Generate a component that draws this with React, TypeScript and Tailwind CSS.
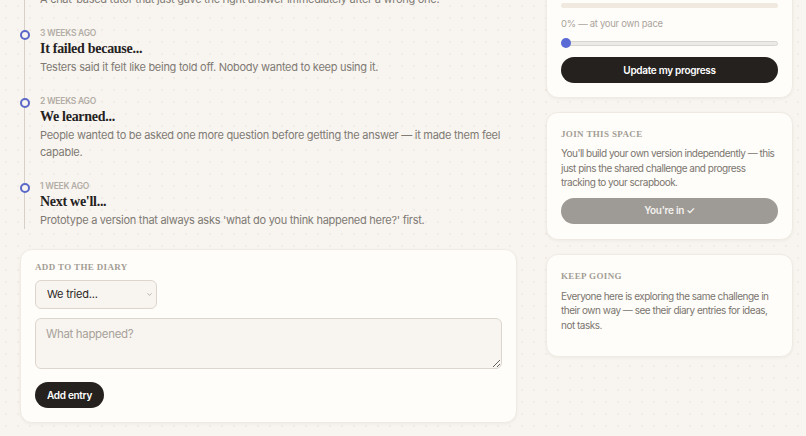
import { ChevronDown } from "lucide-react";

const sans = "font-['Inter','Noto_Sans',sans-serif]";
const serif = "font-['Liberation_Serif','DejaVu_Serif',serif]";

const entries = [
    {
        when: "4 weeks ago",
        title: "We tried...",
        body: "A chat-based tutor that just gave the right answer immediately after a wrong one.",
    },
    {
        when: "3 weeks ago",
        title: "It failed because...",
        body: "Testers said it felt like being told off. Nobody wanted to keep using it.",
    },
    {
        when: "2 weeks ago",
        title: "We learned...",
        body: "People wanted to be asked one more question before getting the answer — it made them feel capable.",
    },
    {
        when: "1 week ago",
        title: "Next we'll...",
        body: "Prototype a version that always asks 'what do you think happened here?' first.",
    },
];

function CardLabel({ children }: { children: string }) {
    return (
        <p
            className={`${serif} text-[9px] leading-[10px] font-bold uppercase tracking-[0.04em] text-[#a39d95]`}
        >
            {children}
        </p>
    );
}

function Card({ className, children }: { className?: string; children: React.ReactNode }) {
    return (
        <div
            className={`rounded-xl bg-[#fffdf9] border border-[#efebe4] shadow-[0_1px_3px_rgba(60,50,40,0.06)] px-[14px] ${className ?? ""}`}
        >
            {children}
        </div>
    );
}

export default function App() {
    return (
        <div
            className={`${sans} h-[436px] w-full overflow-hidden bg-[#f8f5f0] bg-[radial-gradient(#f0ebe4_1px,transparent_1px)] bg-[size:12px_12px]`}
        >
            <div className="flex items-start gap-[29px] px-5">
                {/* Diary column */}
                <div className="w-[497px] shrink-0 -mt-[41px]">
                    <ul className="ml-[4px] border-l border-[#d6d0c8] pl-[15px] flex flex-col gap-[19px]">
                        {entries.map((e) => (
                            <li key={e.when} className="relative">
                                <span className="absolute left-[-20px] top-[3px] h-[10px] w-[10px] rounded-full border-2 border-[#5b68c8] bg-[#f8f5f0]" />
                                <p className="text-[8.5px] leading-[12px] font-semibold uppercase tracking-[-0.03em] text-[#b3ada6]">
                                    {e.when}
                                </p>
                                <h3
                                    className={`${serif} text-[14px] leading-[20px] font-bold tracking-[-0.02em] text-[#26221f]`}
                                >
                                    {e.title}
                                </h3>
                                <p className="text-[11px] leading-[17px] tracking-[-0.025em] text-[#7f7a74]">
                                    {e.body}
                                </p>
                            </li>
                        ))}
                    </ul>

                    <Card className="mt-[20px] pt-[12px] pb-[14px]">
                        <CardLabel>Add to the diary</CardLabel>
                        <div className="relative mt-[8px] w-[122px]">
                            <select className="appearance-none w-full h-[29px] rounded-md border border-[#dcd6ce] bg-[#f8f5f0] pl-[11px] text-[11px] tracking-[-0.02em] text-[#2b2724] outline-none">
                                <option>We tried...</option>
                                <option>It failed because...</option>
                                <option>We learned...</option>
                                <option>Next we'll...</option>
                            </select>
                            <ChevronDown
                                className="pointer-events-none absolute right-[4px] top-[11px] h-[7px] w-[7px] text-[#8a857f]"
                                strokeWidth={2}
                            />
                        </div>
                        <textarea
                            placeholder="What happened?"
                            className="mt-[9px] block w-full h-[51px] rounded-md border border-[#dcd6ce] bg-[#f8f5f0] px-[10px] py-[7px] text-[11.5px] tracking-[-0.03em] text-[#2b2724] placeholder:text-[#a8a29b] outline-none"
                        />
                        <button className="mt-[13px] h-[26px] rounded-full bg-[#24211e] px-[12px] text-[10px] font-semibold tracking-[-0.03em] text-white">
                            Add entry
                        </button>
                    </Card>
                </div>

                {/* Sidebar */}
                <div className="w-[247px] shrink-0 -mt-[36px] flex flex-col gap-[14px]">
                    <Card className="pt-[14px] pb-[14px]">
                        <CardLabel>Your progress</CardLabel>
                        <div className="mt-[14px] h-[5px] rounded-full bg-[#efe9df]" />
                        <p className="mt-[8px] text-[9.5px] leading-[16px] tracking-[-0.03em] text-[#aaa49d]">
                            0% — at your own pace
                        </p>
                        <div className="relative mt-[6px] h-[10px] flex items-center">
                            <div className="h-[5px] w-full rounded-full bg-[#eceae7] border border-[#d9d6d2]" />
                            <span className="absolute left-0 top-0 h-[10px] w-[10px] rounded-full bg-[#5b6bd6]" />
                        </div>
                        <button className="mt-[9px] h-[26px] w-full rounded-full bg-[#24211e] text-[10px] font-semibold tracking-[-0.03em] text-white">
                            Update my progress
                        </button>
                    </Card>

                    <Card className="pt-[16px] pb-[15px]">
                        <CardLabel>Join this space</CardLabel>
                        <p className="mt-[7px] text-[10px] leading-[14.5px] tracking-[-0.05em] text-[#7a756f]">
                            You'll build your own version independently — this just pins the shared
                            challenge and progress tracking to your scrapbook.
                        </p>
                        <button className="mt-[8px] h-[26px] w-full rounded-full bg-[#9e9a95] text-[10px] font-semibold tracking-[-0.03em] text-[#f4f2ef]">
                            You're in ✓
                        </button>
                    </Card>

                    <Card className="pt-[16px] pb-[24px]">
                        <CardLabel>Keep going</CardLabel>
                        <p className="mt-[8px] text-[10px] leading-[14.5px] tracking-[-0.05em] text-[#7a756f]">
                            Everyone here is exploring the same challenge in their own way — see
                            their diary entries for ideas, not tasks.
                        </p>
                    </Card>
                </div>
            </div>
        </div>
    );
}
